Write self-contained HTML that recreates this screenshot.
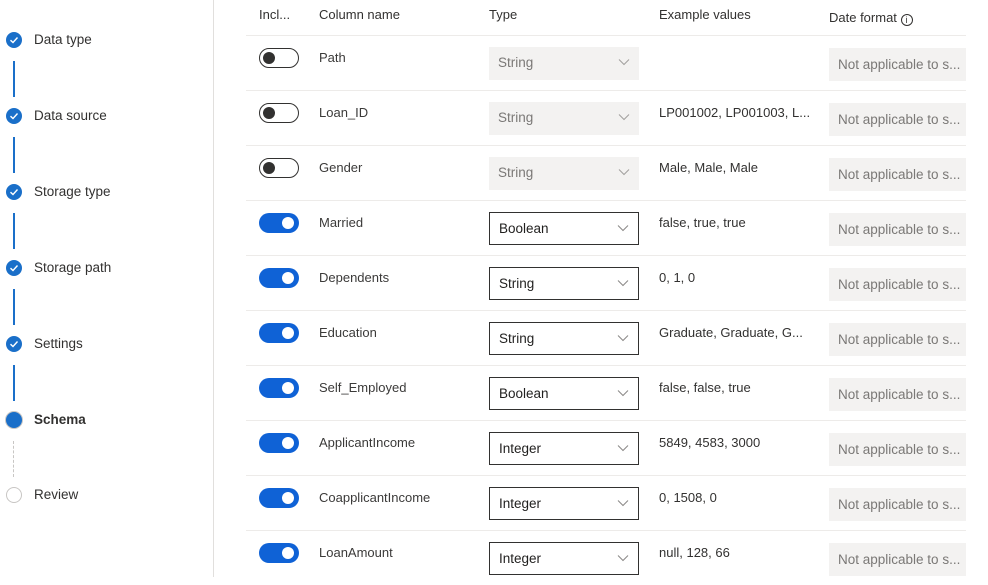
<!DOCTYPE html>
<html><head><style>
*{box-sizing:border-box;margin:0;padding:0}
body{width:988px;height:577px;overflow:hidden;background:#fff;font-family:"Liberation Sans",sans-serif;color:#323130;font-size:13px;position:relative}
.sb{position:absolute;left:0;top:0;width:214px;height:577px;border-right:1px solid #e1dfdd}
.step{position:absolute;left:0;height:20px;width:200px}
.step .c{position:absolute;left:6px;top:2px;width:16px;height:16px;border-radius:50%;background:#1a6fc9}
.step .c svg{position:absolute;left:3px;top:3px}
.step span{position:absolute;left:34px;top:0;font-size:13.5px;line-height:20px;color:#323130}
.vl{position:absolute;left:13px;width:2px;background:#1a6fc9}
.hd{position:absolute;top:7px;font-size:13px;color:#323130}
.row{position:absolute;left:246px;width:720px;height:55px;border-top:1px solid #edebe9}
.tg{position:absolute;left:13px;top:12px;width:40px;height:20px;border-radius:10px}
.tg.off{border:1px solid #323130;background:#fff}
.tg.off::after{content:"";position:absolute;left:3px;top:3px;width:12px;height:12px;border-radius:50%;background:#323130}
.tg.on{background:#0f62d6}
.tg.on::after{content:"";position:absolute;right:5px;top:4px;width:12px;height:12px;border-radius:50%;background:#fff}
.nm{position:absolute;left:73px;top:14px;font-size:13px;color:#3b3a39}
.dd{position:absolute;left:243px;top:11px;width:150px;height:33px;font-size:13.5px;line-height:31px;padding-left:9px}
.dd.dis{background:#f3f2f1;color:#7a7876}
.dd.en{border:1px solid #323130;color:#201f1e}
.dd svg{position:absolute;right:9px;top:11px}
.ex{position:absolute;left:413px;top:14px;font-size:13px;color:#323130}
.df{position:absolute;left:583px;top:12px;width:137px;height:33px;background:#f3f2f1;color:#7a7876;font-size:13.5px;line-height:33px;padding-left:9px;white-space:nowrap;overflow:hidden}
</style></head><body>
<div class="sb">
 <div class="step" style="top:30px"><div class="c"><svg width="10" height="10" viewBox="0 0 10 10"><path d="M1.5 5.2 L4 7.5 L8.5 2.5" stroke="#fff" stroke-width="1.4" fill="none"/></svg></div><span>Data type</span></div>
 <div class="vl" style="top:61px;height:36px"></div>
 <div class="step" style="top:106px"><div class="c"><svg width="10" height="10" viewBox="0 0 10 10"><path d="M1.5 5.2 L4 7.5 L8.5 2.5" stroke="#fff" stroke-width="1.4" fill="none"/></svg></div><span>Data source</span></div>
 <div class="vl" style="top:137px;height:36px"></div>
 <div class="step" style="top:182px"><div class="c"><svg width="10" height="10" viewBox="0 0 10 10"><path d="M1.5 5.2 L4 7.5 L8.5 2.5" stroke="#fff" stroke-width="1.4" fill="none"/></svg></div><span>Storage type</span></div>
 <div class="vl" style="top:213px;height:36px"></div>
 <div class="step" style="top:258px"><div class="c"><svg width="10" height="10" viewBox="0 0 10 10"><path d="M1.5 5.2 L4 7.5 L8.5 2.5" stroke="#fff" stroke-width="1.4" fill="none"/></svg></div><span>Storage path</span></div>
 <div class="vl" style="top:289px;height:36px"></div>
 <div class="step" style="top:334px"><div class="c"><svg width="10" height="10" viewBox="0 0 10 10"><path d="M1.5 5.2 L4 7.5 L8.5 2.5" stroke="#fff" stroke-width="1.4" fill="none"/></svg></div><span>Settings</span></div>
 <div class="vl" style="top:365px;height:36px"></div>
 <div class="step" style="top:410px"><div class="c" style="box-shadow:0 0 0 1px #c8c6c4"></div><span style="font-weight:bold">Schema</span></div>
 <div style="position:absolute;left:13px;top:441px;height:36px;border-left:1px dashed #c8c6c4"></div>
 <div class="step" style="top:485px"><div class="c" style="background:#fff;border:1px solid #c8c6c4"></div><span>Review</span></div>
</div>
<div class="hd" style="left:259px">Incl...</div>
<div class="hd" style="left:319px">Column name</div>
<div class="hd" style="left:489px">Type</div>
<div class="hd" style="left:659px">Example values</div>
<div class="hd" style="left:829px;top:10px">Date format <span style="display:inline-block;width:12px;height:12px;border:1px solid #323130;border-radius:50%;font-size:9px;line-height:10px;text-align:center;vertical-align:-1px">i</span></div>

<div class="row" style="top:35px"><div class="tg off"></div><div class="nm">Path</div><div class="dd dis">String<svg width="12" height="8"><path d="M1 1.5 L6 6.5 L11 1.5" stroke="#a19f9d" fill="none"/></svg></div><div class="ex"></div><div class="df">Not applicable to s...</div></div>
<div class="row" style="top:90px"><div class="tg off"></div><div class="nm">Loan_ID</div><div class="dd dis">String<svg width="12" height="8"><path d="M1 1.5 L6 6.5 L11 1.5" stroke="#a19f9d" fill="none"/></svg></div><div class="ex">LP001002, LP001003, L...</div><div class="df">Not applicable to s...</div></div>
<div class="row" style="top:145px"><div class="tg off"></div><div class="nm">Gender</div><div class="dd dis">String<svg width="12" height="8"><path d="M1 1.5 L6 6.5 L11 1.5" stroke="#a19f9d" fill="none"/></svg></div><div class="ex">Male, Male, Male</div><div class="df">Not applicable to s...</div></div>
<div class="row" style="top:200px"><div class="tg on"></div><div class="nm">Married</div><div class="dd en">Boolean<svg width="12" height="8"><path d="M1 1.5 L6 6.5 L11 1.5" stroke="#8a8886" fill="none"/></svg></div><div class="ex">false, true, true</div><div class="df">Not applicable to s...</div></div>
<div class="row" style="top:255px"><div class="tg on"></div><div class="nm">Dependents</div><div class="dd en">String<svg width="12" height="8"><path d="M1 1.5 L6 6.5 L11 1.5" stroke="#8a8886" fill="none"/></svg></div><div class="ex">0, 1, 0</div><div class="df">Not applicable to s...</div></div>
<div class="row" style="top:310px"><div class="tg on"></div><div class="nm">Education</div><div class="dd en">String<svg width="12" height="8"><path d="M1 1.5 L6 6.5 L11 1.5" stroke="#8a8886" fill="none"/></svg></div><div class="ex">Graduate, Graduate, G...</div><div class="df">Not applicable to s...</div></div>
<div class="row" style="top:365px"><div class="tg on"></div><div class="nm">Self_Employed</div><div class="dd en">Boolean<svg width="12" height="8"><path d="M1 1.5 L6 6.5 L11 1.5" stroke="#8a8886" fill="none"/></svg></div><div class="ex">false, false, true</div><div class="df">Not applicable to s...</div></div>
<div class="row" style="top:420px"><div class="tg on"></div><div class="nm">ApplicantIncome</div><div class="dd en">Integer<svg width="12" height="8"><path d="M1 1.5 L6 6.5 L11 1.5" stroke="#8a8886" fill="none"/></svg></div><div class="ex">5849, 4583, 3000</div><div class="df">Not applicable to s...</div></div>
<div class="row" style="top:475px"><div class="tg on"></div><div class="nm">CoapplicantIncome</div><div class="dd en">Integer<svg width="12" height="8"><path d="M1 1.5 L6 6.5 L11 1.5" stroke="#8a8886" fill="none"/></svg></div><div class="ex">0, 1508, 0</div><div class="df">Not applicable to s...</div></div>
<div class="row" style="top:530px"><div class="tg on"></div><div class="nm">LoanAmount</div><div class="dd en">Integer<svg width="12" height="8"><path d="M1 1.5 L6 6.5 L11 1.5" stroke="#8a8886" fill="none"/></svg></div><div class="ex">null, 128, 66</div><div class="df">Not applicable to s...</div></div>
</body></html>
